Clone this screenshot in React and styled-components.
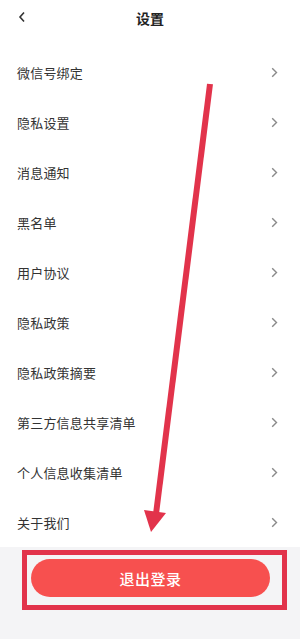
import React from "react";
import styled, { createGlobalStyle } from "styled-components";

const items = [
  "微信号绑定",
  "隐私设置",
  "消息通知",
  "黑名单",
  "用户协议",
  "隐私政策",
  "隐私政策摘要",
  "第三方信息共享清单",
  "个人信息收集清单",
  "关于我们",
];

const App = () => {
  return (
    <Page>
      <GlobalStyle />
      <Header>
        <BackButton>
          <svg width="8" height="12" viewBox="0 0 8 12">
            <polyline points="6,1.5 2,6 6,10.5" fill="none" stroke="#333" strokeWidth="1.6" />
          </svg>
        </BackButton>
        <Title>设置</Title>
      </Header>

      <List>
        {items.map((label) => (
          <Row key={label}>
            <Label>{label}</Label>
            <svg width="7" height="11" viewBox="0 0 7 11">
              <polyline points="1.2,1.2 5.5,5.5 1.2,9.8" fill="none" stroke="#8a8a8a" strokeWidth="1.4" />
            </svg>
          </Row>
        ))}
      </List>

      <Footer>
        <Highlight>
          <LogoutButton>退出登录</LogoutButton>
        </Highlight>
      </Footer>

      {/* annotation arrow drawn over the list */}
      <Arrow width="300" height="639" viewBox="0 0 300 639">
        <line x1="210" y1="84" x2="156" y2="514" stroke="#e2334b" strokeWidth="6" />
        <polygon points="144,510 166,513 151,532" fill="#e2334b" />
      </Arrow>
    </Page>
  );
};

// styled components

const GlobalStyle = createGlobalStyle`
  body {
    margin: 0;
    background: #ffffff;
    font-family: "Noto Sans CJK SC", "Noto Sans", sans-serif;
  }
`;

const Page = styled.div`
  position: relative;
  width: 300px;
  height: 639px;
  display: flex;
  flex-direction: column;
  overflow: hidden;
  background: #ffffff;
`;

const Header = styled.div`
  height: 47px;
  flex-shrink: 0;
  display: flex;
  align-items: flex-start;
  justify-content: center;
  position: relative;
  padding-top: 8px;
  box-sizing: border-box;
`;

const BackButton = styled.div`
  position: absolute;
  left: 18px;
  top: 11px;
  display: flex;
`;

const Title = styled.h1`
  margin: 0;
  font-size: 14px;
  line-height: 20px;
  font-weight: 700;
  color: #222;
`;

const List = styled.div`
  display: flex;
  flex-direction: column;
`;

const Row = styled.div`
  height: 50px;
  display: flex;
  align-items: center;
  justify-content: space-between;
  padding: 0 22px 0 17px;
`;

const Label = styled.span`
  font-size: 13px;
  color: #333;
  letter-spacing: 0.2px;
`;

const Footer = styled.div`
  flex: 1;
  background: #f4f4f6;
  padding: 3px 13px 0 22px;
`;

const Highlight = styled.div`
  border: 5px solid #e2334b;
  height: 60px;
  box-sizing: border-box;
  padding: 4px 12px 8px 4px;
  display: flex;
`;

const LogoutButton = styled.button`
  flex: 1;
  border: none;
  border-radius: 19px;
  background: #f7504f;
  color: #ffffff;
  font-family: "Noto Sans CJK SC", sans-serif;
  font-size: 15px;
  font-weight: 500;
  letter-spacing: 0.5px;
`;

const Arrow = styled.svg`
  position: absolute;
  left: 0;
  top: 0;
  pointer-events: none;
`;

export default App;
